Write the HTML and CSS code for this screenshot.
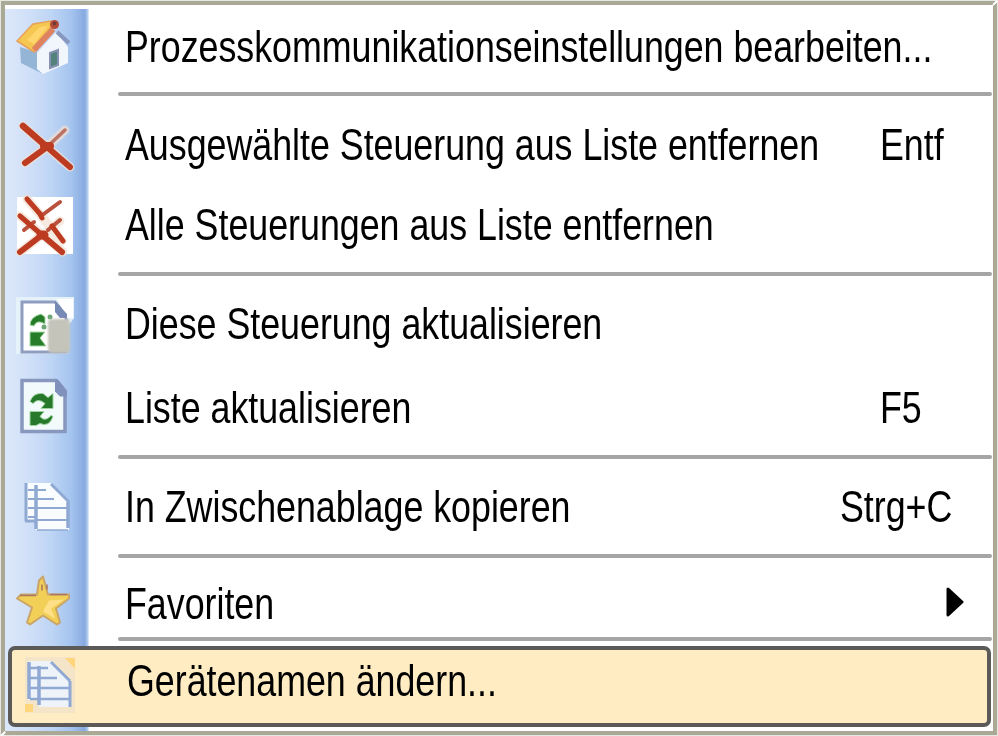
FILE: index.html
```html
<!DOCTYPE html>
<html lang="de">
<head>
<meta charset="utf-8">
<title>Kontextmenü</title>
<link rel="stylesheet" href="styles.css">
</head>
<body>
<div class="menu" role="menu">
  <div class="item" role="menuitem">
    <svg class="icon" viewBox="5 17 83 60">
      <path d="M20 47 39 53 41 73 21 63Z" fill="#94b5d6"/>
      <path d="M37 53 56 32 68 47 68 63 43 74 37 69Z" fill="#f1f5fc"/>
      <path d="M57 32 69 43" stroke="#8797bf" stroke-width="4"/>
      <path d="M17 41 33 24 51 21 54 27 34 52Z" fill="#f5c650" stroke="#e6a25d" stroke-width="1.5"/>
      <path d="M27 40 40 27 48 26 34 44Z" fill="#ffd66e"/>
      <path d="M34 50 53 29" stroke="#df8260" stroke-width="6"/>
      <path d="M50 53 58 50 58 65 50 68Z" fill="#54837e" stroke="#8792b2" stroke-width="2"/>
      <circle cx="54.500" cy="24.500" r="4.500" fill="#b54b39"/>
      <circle cx="54.500" cy="23.500" r="2" fill="#713c35"/>
    </svg>
    <span class="label">Prozesskommunikationseinstellungen bearbeiten...</span>
  </div>
  <div class="separator"></div>
  <div class="item" role="menuitem">
    <svg class="icon cross" viewBox="5 115 83 60">
      <path class="halo" d="M23 126 47 147 70 167M25 163 47 147 65 130"/>
      <path d="M23 126 47 147" stroke-width="6.500"/>
      <path d="M47 147 70 167M25 163 47 147" stroke-width="6"/>
      <path class="faint" d="M47 147 65 130" stroke-width="3.500"/>
      <path d="M44 146H50" stroke-width="8"/>
    </svg>
    <span class="label">Ausgewählte Steuerung aus Liste entfernen</span>
    <span class="key key-mid">Entf</span>
  </div>
  <div class="item" role="menuitem">
    <svg class="icon cross" viewBox="5 195 83 60">
      <rect x="17" y="197" width="56" height="57" fill="#fff"/>
      <path class="halo" d="M27 199 62 241M20 216 63 252M20 252 60 221"/>
      <path d="M27 199 41 215" stroke-width="5"/>
      <path class="dim" d="M41 216 60 202M24 230 34 222M48 230 60 220" stroke-width="4"/>
      <path d="M40 214 42 218M52 226 63 241M20 216 42 235" stroke-width="5"/>
      <path d="M20 252 42 235 62 252" stroke-width="6"/>
      <path d="M41 235H44" stroke-width="9"/>
    </svg>
    <span class="label">Alle Steuerungen aus Liste entfernen</span>
  </div>
  <div class="separator"></div>
  <div class="item" role="menuitem">
    <svg class="icon" viewBox="5 294 83 60">
      <path d="M16 297H74V318L68 326V354H16Z" fill="#e6f2f9"/>
      <path d="M22 302H55L66 315V352H22Z" fill="#fff" stroke="#8f9dc0" stroke-width="3"/>
      <path d="M57 299H73V318H67Z" fill="#fff"/>
      <path d="M55 301V312L60 318H67V314Z" fill="#7789b5"/>
      <path d="M30 325Q30 317 41 314L45 317 45 324Q37 319 34 326Z" fill="#267c28" stroke="#a5d9a3"/>
      <path d="M30 332H45L40 338 46 346H30Z" fill="#267c28" stroke="#a5d9a3"/>
      <circle cx="50" cy="317" r="2.500" fill="#6da775"/>
      <circle cx="44" cy="327" r="2.500" fill="#6da775"/>
      <rect class="smudge" x="48" y="319" width="22" height="34" rx="4"/>
    </svg>
    <span class="label">Diese Steuerung aktualisieren</span>
  </div>
  <div class="item" role="menuitem">
    <svg class="icon" viewBox="5 377.500 83 60">
      <path d="M22 380H56L65 391V431H22Z" fill="#f3fafc" stroke="#8797bd" stroke-width="3.500"/>
      <path d="M55 379V391L60 396H67V390L58 379Z" fill="#8092bb"/>
      <path d="M30 401Q33 392 43 393L48 397 53 393V408H41L45 403Q38 397 33 403Z" fill="#26782a" stroke="#9fd29f"/>
      <path d="M30 411H44L40 416Q45 422 51 415L53 416Q49 427 40 423L36 425H30Z" fill="#26782a" stroke="#9fd29f"/>
    </svg>
    <span class="label">Liste aktualisieren</span>
    <span class="key key-mid">F5</span>
  </div>
  <div class="separator"></div>
  <div class="item" role="menuitem">
    <svg class="icon sheet" viewBox="5 477 83 60">
      <path d="M25 483H51L69 503V530H36V521H25Z" fill="#fafdff"/>
      <path d="M26 483V521" stroke-width="3"/>
      <path d="M36 485V529" stroke-width="3.500"/>
      <path d="M25 521H37" stroke-width="3"/>
      <path d="M28 490H46M28 499H54M28 508H68M28 517H35M36 520H67" stroke-width="2"/>
      <path d="M51 484 69 502" stroke-width="3"/>
      <path d="M68 502V528" stroke-width="3.500"/>
      <path d="M37 530H68" stroke-width="1.500"/>
    </svg>
    <span class="label">In Zwischenablage kopieren</span>
    <span class="key key-wide">Strg+C</span>
  </div>
  <div class="separator"></div>
  <div class="item" role="menuitem">
    <svg class="icon" viewBox="5 573.500 83 60">
      <path d="M43 576 48 594H69V598L56 608 60 622 57 624 43 615 30 624 27 622 32 607 17 598 21 594H37L39 580Z" fill="#f2cf57" stroke="#caa568" stroke-width="2" stroke-linejoin="round"/>
      <path d="M49 600 64 599 51 608 55 618 43 611Z" fill="#ffe088"/>
      <path d="M20 595H36M50 594H67M42 584V590M47 584V589" stroke="#a87661" stroke-width="1.500"/>
    </svg>
    <span class="label">Favoriten</span>
    <svg class="arrow" viewBox="0 0 18 30"><path d="M2 2 2 28 16 15Z"/></svg>
  </div>
  <div class="separator"></div>
  <div class="item selected" role="menuitem">
    <svg class="icon sheet" viewBox="12 651 83 60">
      <path d="M25 657H75V713H25Z" fill="#f5e5c8"/>
      <path d="M65 658H75V669ZM25 704H33V712H25Z" fill="#ffd67c"/>
      <path d="M28 661H52L71 681V707H39V700H28Z" fill="#eef3fa"/>
      <path d="M29 662V699M39 666V705" stroke-width="3.500"/>
      <path d="M30 668H48M30 678H57M30 688H70M30 699H70" stroke-width="2.500"/>
      <path d="M51 662 70 681" stroke-width="3"/>
      <path d="M70 681V707" stroke-width="3"/>
    </svg>
    <span class="label">Gerätenamen ändern...</span>
  </div>
  <div class="mitre mitre-top"></div>
  <div class="mitre mitre-bottom"></div>
</div>
</body>
</html>
```

FILE: styles.css
```css
* { box-sizing: border-box; }

body {
  margin: 0;
  background: #e7e7e1;
  overflow: hidden;
}

.menu {
  position: relative;
  display: grid;
  grid-template-rows: 84px 10px 92px 68px 30px 70px 94px 8px 90px 10px 76px 4px 86px;
  align-content: start;
  width: 996px;
  height: 734px;
  margin: 1px;
  border: 4px solid #aaa996;
  background:
    linear-gradient(90deg, #dce7fa 0, #d2e1f8 25%, #bed5f5 55%, #a3c3ee 80%, #86a9df 95%, #b9d3f0 99%, #fff 100%) 0 4px / 84px 100% no-repeat,
    #fff;
  color: #000;
  font: 44px/50px "Liberation Sans", Arial, sans-serif;
}

.item {
  display: grid;
  grid-template-columns: 83px 37px 1fr auto;
  align-items: center;
  min-width: 0;
}

/* Optical centring of the rows inside their tracks. */
.item:nth-child(7) { padding-top: 3px; }
.item:nth-child(9) { padding-top: 2px; }
.item:nth-child(11) { padding-top: 9px; }

.icon {
  grid-column: 1;
  width: 83px;
  height: 60px;
  overflow: visible;
  filter: blur(.7px);
}

.label,
.key {
  white-space: nowrap;
  transform: scaleX(.813);
  transform-origin: left center;
}

.label {
  grid-column: 3;
  width: 0;
}

.key { grid-column: 4; }
.key-mid { width: 113px; }
.key-wide { width: 153px; }

.arrow {
  grid-column: 4;
  width: 18px;
  height: 30px;
  margin: 0 29px 4px 0;
  stroke: #000;
  stroke-width: 3;
  stroke-linejoin: round;
}

.separator {
  align-self: center;
  height: 4px;
  margin: 0 1px 0 113px;
  border-radius: 2px;
  background: #a5a5a5;
}

.selected {
  grid-template-columns: 83px 32px 1fr auto;
  height: 81px;
  margin: 5px 2px 0 3px;
  padding-bottom: 11px;
  border: 4px solid #5b5a59;
  border-radius: 7px;
  background: #ffecc2;
}

.cross path {
  fill: none;
  stroke: #bd3b20;
  stroke-linecap: round;
}

.cross .halo {
  stroke: #f1dfd3;
  stroke-width: 9;
  opacity: .7;
}

.cross .faint { stroke: #bd7263; }
.cross .dim { stroke: #b9513c; }

.smudge {
  fill: #c5c4ba;
  filter: blur(1px);
}

.sheet path { stroke: #8fa9d3; }
.sheet path[fill] { stroke: none; }

.mitre {
  position: absolute;
  width: 6px;
  height: 1.5px;
  background: #fff;
  transform: rotate(-45deg);
}

.mitre-top { top: -3px; right: -5px; }
.mitre-bottom { bottom: -3px; left: -5px; }
```
